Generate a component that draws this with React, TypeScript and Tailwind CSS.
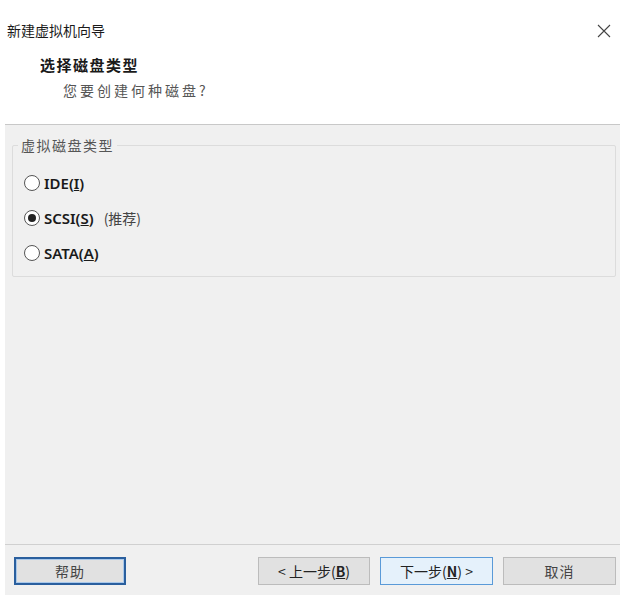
import React, { useState } from 'react';

type DiskType = 'ide' | 'scsi' | 'sata';

const cjk = "font-['Noto_Sans_CJK_SC','Noto_Sans',sans-serif]";

const Radio: React.FC<{ checked: boolean; onClick: () => void; children: React.ReactNode }> = ({ checked, onClick, children }) => (
    <button onClick={onClick} className="flex items-center gap-[4px] text-left">
        <span className="w-[16px] h-[16px] rounded-full border border-[#555] bg-white flex items-center justify-center">
            {checked && <span className="w-[8px] h-[8px] rounded-full bg-[#222]"></span>}
        </span>
        {children}
    </button>
);

const App: React.FC = () => {
    const [disk, setDisk] = useState<DiskType>('scsi');

    return (
        <div className={`w-[620px] h-[609px] bg-white flex flex-col ${cjk} text-[#1a1a1a]`}>
            {/* Title bar */}
            <div className="h-[60px] flex items-start justify-between pl-[7px] pr-[8px] pt-[20px]">
                <span className="text-[14px] leading-[20px]">新建虚拟机向导</span>
                <svg width="16" height="16" viewBox="0 0 16 16" className="mt-[3px]">
                    <path d="M2 2L14 14M14 2L2 14" stroke="#444" strokeWidth="1.1" fill="none" />
                </svg>
            </div>

            {/* Header */}
            <div className="h-[64px] pl-[40px]">
                <p className="text-[15px] leading-[20px] font-bold tracking-[1.5px] -mt-[5px]">选择磁盘类型</p>
                <p className="text-[14px] leading-[20px] text-[#555] pl-[23px] mt-[5px] tracking-[3px]">您要创建何种磁盘?</p>
            </div>

            {/* Body */}
            <div className="ml-[5px] flex-1 flex flex-col bg-[#f0f0f0] border-t border-[#c8c8c8]">
                <div className="flex-1 pt-[20px] pl-[7px] pr-[4px]">
                    <div className="relative border border-[#dcdcdc] rounded-[2px] h-[132px] pt-[27px] pl-[11px] flex flex-col gap-[15px]">
                        <span className="absolute -top-[10px] left-[5px] px-[3px] bg-[#f0f0f0] text-[14px] leading-[18px] text-[#555] tracking-[1.5px]">虚拟磁盘类型</span>
                        <Radio checked={disk === 'ide'} onClick={() => setDisk('ide')}>
                            <span className="text-[15px] leading-[20px] font-semibold font-['Noto_Sans',sans-serif]">IDE(<u>I</u>)</span>
                        </Radio>
                        <Radio checked={disk === 'scsi'} onClick={() => setDisk('scsi')}>
                            <span className="text-[15px] leading-[20px] font-semibold font-['Noto_Sans',sans-serif]">SCSI(<u>S</u>)</span>
                            <span className="text-[14px] leading-[20px] text-[#444] ml-[6px]">(推荐)</span>
                        </Radio>
                        <Radio checked={disk === 'sata'} onClick={() => setDisk('sata')}>
                            <span className="text-[15px] leading-[20px] font-semibold font-['Noto_Sans',sans-serif]">SATA(<u>A</u>)</span>
                        </Radio>
                    </div>
                </div>

                {/* Footer buttons */}
                <div className="h-[51px] border-t border-[#d0d0d0] flex items-start pt-[12px] pl-[9px] pr-[4px]">
                    <button className="w-[112px] h-[28px] border-2 border-[#2a5f9e] bg-[#e1e1e1] text-[14px] text-[#444] tracking-[1px] shadow-[inset_0_0_0_1px_#a9c8ea]">帮助</button>
                    <div className="ml-auto flex gap-[10px]">
                        <button className="w-[112px] h-[28px] border border-[#bcbcbc] bg-[#e1e1e1] text-[14px] text-[#222]">
                            &lt; 上一步(<u className="font-semibold">B</u>)
                        </button>
                        <button className="w-[113px] h-[28px] border border-[#5a9ad8] bg-[#e5f1fb] text-[14px] text-[#222]">
                            下一步(<u className="font-semibold">N</u>) &gt;
                        </button>
                        <button className="w-[113px] h-[28px] border border-[#bcbcbc] bg-[#e1e1e1] text-[14px] text-[#444] tracking-[1px]">取消</button>
                    </div>
                </div>
            </div>
            <div className="h-[14px] bg-white"></div>
        </div>
    );
};

export default App;
